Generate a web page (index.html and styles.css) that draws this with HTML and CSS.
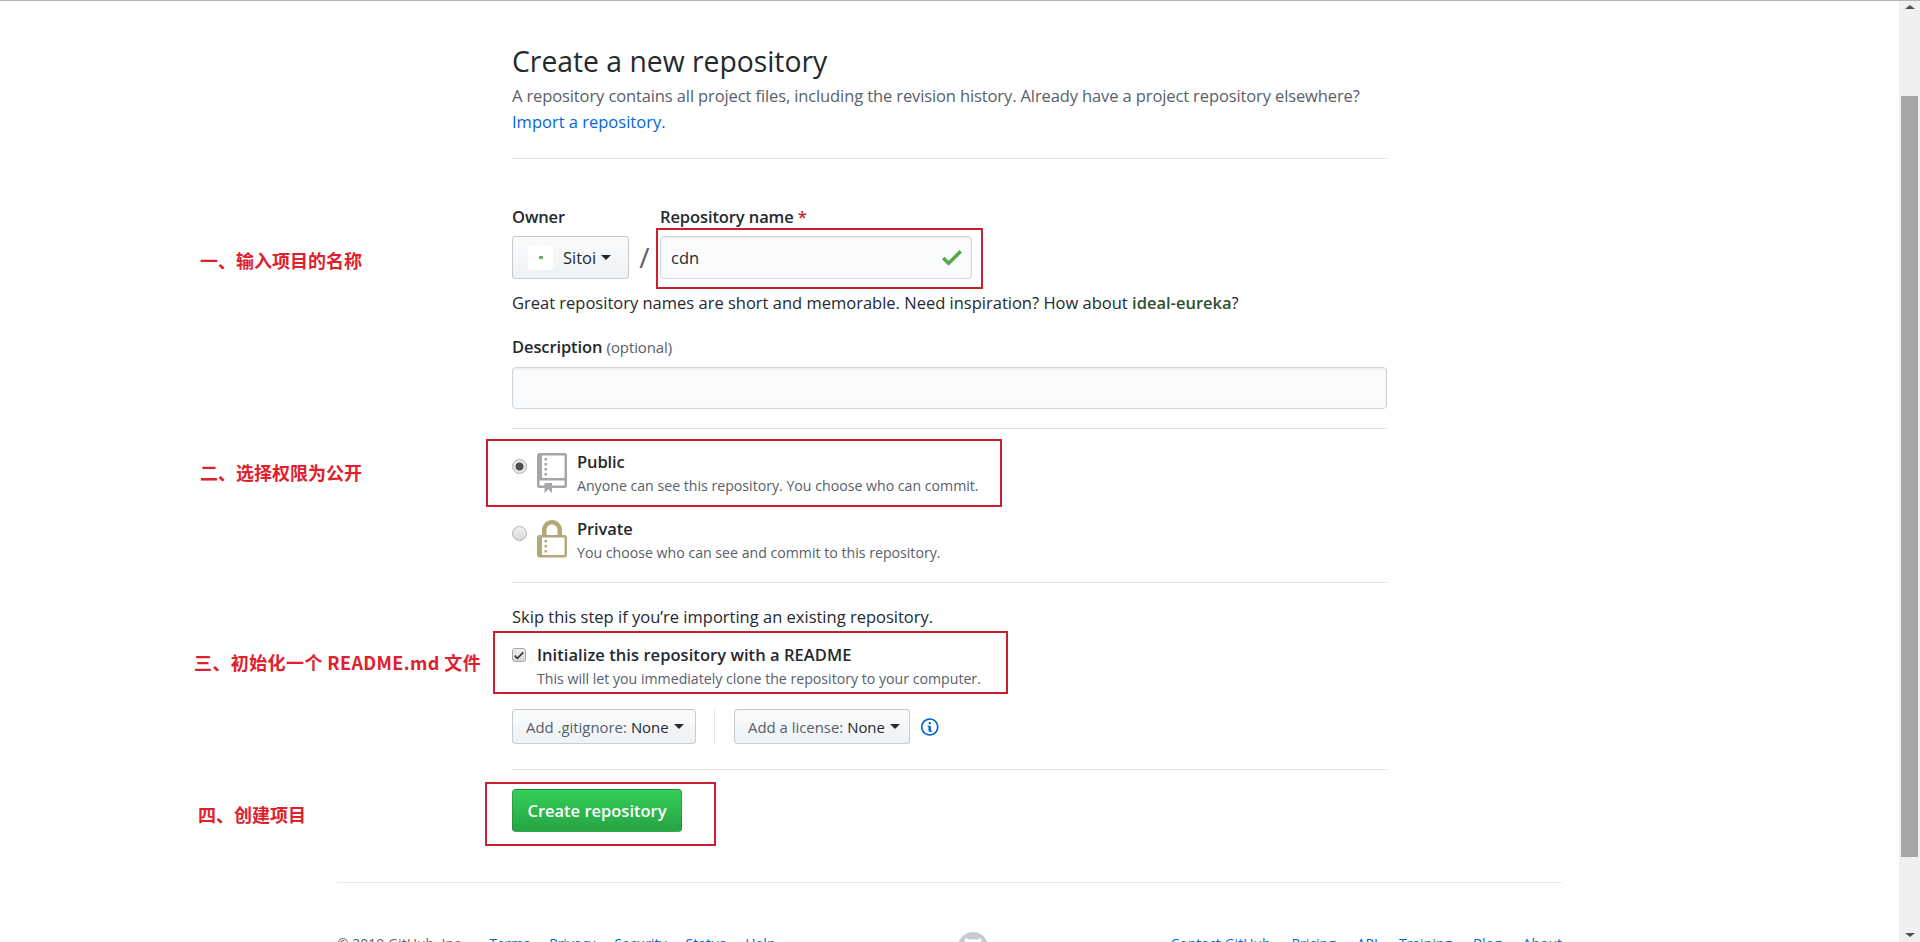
FILE: index.html
```html
<!DOCTYPE html>
<html lang="en">
<head>
  <meta charset="UTF-8" />
  <title>Create a new repository</title>
  <link rel="stylesheet" href="styles.css">
</head>
<body>

<div class="page">
  <main class="form-container">
    <div class="subhead">
      <h1>Create a new repository</h1>
      <p>A repository contains all project files, including the revision history. Already have a project repository elsewhere?<br><a href="#">Import a repository.</a></p>
    </div>

    <div class="owner-row">
      <div class="owner-col">
        <label>Owner</label>
        <button class="btn btn-owner" type="button">
          <span class="avatar"><i></i></span>
          <span>Sitoi</span>
          <span class="caret"></span>
        </button>
      </div>
      <span class="slash">/</span>
      <div class="name-col">
        <label>Repository name <em>*</em></label>
        <div class="name-field">
          <input class="text-input" type="text" value="cdn" />
          <svg class="check" viewBox="0 0 12 16"><path d="M12 5l-8 8-4-4 1.5-1.5L4 10l6.5-6.5L12 5z"/></svg>
        </div>
      </div>
    </div>
    <p class="name-note">Great repository names are short and memorable. Need inspiration? How about <strong>ideal-eureka</strong>?</p>

    <div class="desc-block">
      <label>Description <small>(optional)</small></label>
      <input class="text-input desc-input" type="text" />
    </div>

    <hr class="rule-desc" />

    <div class="choice choice-public">
      <span class="radio radio-on"></span>
      <svg class="choice-icon icon-repo" viewBox="0 0 12 16"><path d="M4 9H3V8h1v1zm0-3H3v1h1V6zm0-2H3v1h1V4zm0-2H3v1h1V2zm8-1v12c0 .55-.45 1-1 1H6v2l-1.5-1.5L3 16v-2H1c-.55 0-1-.45-1-1V1c0-.55.45-1 1-1h10c.55 0 1 .45 1 1zm-1 10H1v2h2v-1h3v1h5v-2zm0-10H2v9h9V1z"/></svg>
      <div class="choice-text">
        <b>Public</b>
        <span>Anyone can see this repository. You choose who can commit.</span>
      </div>
    </div>
    <div class="choice choice-private">
      <span class="radio"></span>
      <svg class="choice-icon icon-lock" viewBox="0 0 12 16"><path d="M4 13H3v-1h1v1zm8-6v7c0 .55-.45 1-1 1H1c-.55 0-1-.45-1-1V7c0-.55.45-1 1-1h1V4c0-2.2 1.8-4 4-4s4 1.8 4 4v2h1c.55 0 1 .45 1 1zM3.8 6h4.41V4c0-1.22-.98-2.2-2.2-2.2-1.22 0-2.2.98-2.2 2.2v2H3.8zM11 7H2v7h9V7zM4 8H3v1h1V8zm0 2H3v1h1v-1z"/></svg>
      <div class="choice-text">
        <b>Private</b>
        <span>You choose who can see and commit to this repository.</span>
      </div>
    </div>

    <hr class="rule-private" />

    <p class="skip-note">Skip this step if you’re importing an existing repository.</p>

    <div class="readme">
      <span class="checkbox"><svg viewBox="0 0 12 16"><path d="M12 5l-8 8-4-4 1.5-1.5L4 10l6.5-6.5L12 5z"/></svg></span>
      <div class="choice-text">
        <b>Initialize this repository with a README</b>
        <span>This will let you immediately clone the repository to your computer.</span>
      </div>
    </div>

    <div class="addons">
      <button class="btn btn-add btn-ignore" type="button">Add .gitignore: <strong>None</strong><span class="caret"></span></button>
      <span class="addons-sep"></span>
      <button class="btn btn-add btn-license" type="button">Add a license: <strong>None</strong><span class="caret"></span></button>
      <svg class="info" viewBox="0 0 14 16"><path d="M6.3 5.69a.942.942 0 0 1-.28-.7c0-.28.09-.52.28-.7.19-.18.42-.28.7-.28.28 0 .52.09.7.28.18.19.28.42.28.7 0 .28-.09.52-.28.7a1 1 0 0 1-.7.3c-.28 0-.52-.11-.7-.3zM8 7.99c-.02-.25-.11-.48-.31-.69-.2-.19-.42-.3-.69-.31H6c-.27.02-.48.13-.69.31-.2.2-.3.44-.31.69h1v3c.02.27.11.5.31.69.2.2.42.31.69.31h1c.27 0 .48-.11.69-.31.2-.19.3-.42.31-.69H8V7.98v.01zM7 2.3c-3.14 0-5.7 2.54-5.7 5.68 0 3.14 2.56 5.7 5.7 5.7s5.7-2.55 5.7-5.7c0-3.15-2.56-5.69-5.7-5.69v.01zM7 .98c3.86 0 7 3.14 7 7s-3.14 7-7 7-7-3.12-7-7 3.14-7 7-7z"/></svg>
    </div>

    <hr class="rule-addons" />

    <button class="btn-primary" type="button">Create repository</button>
  </main>

  <footer class="site-footer">
    <div class="footer-inner">
      <div class="footer-links">
        <span class="copyright">© 2019 GitHub, Inc.</span>
        <a href="#">Terms</a><a href="#">Privacy</a><a href="#">Security</a><a href="#">Status</a><a href="#">Help</a>
      </div>
      <svg class="footer-logo" viewBox="0 0 16 16"><path d="M8 0C3.58 0 0 3.58 0 8c0 3.54 2.29 6.53 5.47 7.59.4.07.55-.17.55-.38 0-.19-.01-.82-.01-1.49-2.01.37-2.53-.49-2.69-.94-.09-.23-.48-.94-.82-1.13-.28-.15-.68-.52-.01-.53.63-.01 1.08.58 1.23.82.72 1.21 1.87.87 2.33.66.07-.52.28-.87.51-1.07-1.78-.2-3.64-.89-3.64-3.95 0-.87.31-1.59.82-2.15-.08-.2-.36-1.02.08-2.12 0 0 .67-.21 2.2.82.64-.18 1.32-.27 2-.27.68 0 1.36.09 2 .27 1.53-1.04 2.2-.82 2.2-.82.44 1.1.16 1.92.08 2.12.51.56.82 1.27.82 2.15 0 3.07-1.87 3.75-3.65 3.95.29.25.54.73.54 1.48 0 1.07-.01 1.93-.01 2.2 0 .21.15.46.55.38A8.013 8.013 0 0 0 16 8c0-4.42-3.58-8-8-8z"/></svg>
      <div class="footer-links footer-links-right">
        <a href="#">Contact GitHub</a><a href="#">Pricing</a><a href="#">API</a><a href="#">Training</a><a href="#">Blog</a><a href="#">About</a>
      </div>
    </div>
  </footer>

  <!-- tutorial notes drawn over the screenshot -->
  <span class="note note-name">一、输入项目的名称</span>
  <span class="note note-public">二、选择权限为公开</span>
  <span class="note note-readme">三、初始化一个 README.md 文件</span>
  <span class="note note-create">四、创建项目</span>
  <span class="mark mark-name"></span>
  <span class="mark mark-public"></span>
  <span class="mark mark-readme"></span>
  <span class="mark mark-create"></span>
</div>

<div class="scrollbar">
  <span class="arrow-up"></span>
  <span class="thumb"></span>
  <span class="arrow-down"></span>
</div>

</body>
</html>
```

FILE: styles.css
```css
* {
  box-sizing: border-box;
}
html, body {
  height: 100%;
}
body {
  margin: 0;
  display: flex;
  height: 942px;
  overflow: hidden;
  background: #fff;
  color: #24292e;
  font-family: "Open Sans", "Noto Sans", sans-serif;
  font-size: 16.5px;
  line-height: 26px;
  border-top: 1px solid #b4b4b4;
}
.page {
  position: relative;
  flex: 1;
  overflow: hidden;
}
.form-container {
  width: 875px;
  margin: 0 auto;
  padding-top: 41px;
}
a {
  color: #0366d6;
  text-decoration: none;
}
h1, p {
  margin: 0;
}
hr {
  height: 1px;
  margin: 0;
  border: 0;
  background: #e1e4e8;
}

.subhead {
  height: 117px;
  border-bottom: 1px solid #e1e4e8;
}
.subhead h1 {
  font-size: 28.3px;
  font-weight: 400;
  line-height: 38px;
}
.subhead p {
  color: #586069;
  margin-top: 3px;
  letter-spacing: -0.115px;
}
.subhead a {
  letter-spacing: 0;
}

label {
  display: block;
  font-weight: 600;
  letter-spacing: -0.1px;
}
.owner-row {
  display: flex;
  align-items: flex-end;
  margin-top: 45px;
}
.owner-col label, .name-col label {
  height: 26px;
  margin-bottom: 6px;
}
.name-col label em {
  color: #cb2431;
  font-style: normal;
}
.btn {
  display: inline-flex;
  align-items: center;
  border: 1px solid rgba(27, 31, 35, 0.2);
  border-radius: 4px;
  background: linear-gradient(180deg, #fafbfc, #eff3f6 90%);
  color: #24292e;
  font-family: inherit;
  font-weight: 500;
}
.btn-owner {
  width: 117px;
  height: 43px;
  padding: 0 0 0 15px;
  font-size: 16.5px;
}
.avatar {
  display: flex;
  align-items: center;
  justify-content: center;
  width: 25px;
  height: 24px;
  margin-right: 10px;
  border-radius: 4px;
  background: #fff;
}
.avatar i {
  width: 4px;
  height: 3px;
  background: #6ba368;
  border-radius: 1px;
}
.caret {
  width: 0;
  height: 0;
  margin-left: 5px;
  border-top: 5px solid #24292e;
  border-left: 5px solid transparent;
  border-right: 5px solid transparent;
}
.slash {
  width: 31px;
  height: 43px;
  color: #586069;
  font-size: 28px;
  line-height: 43px;
  text-align: center;
}
.name-field {
  position: relative;
  width: 312px;
}
.text-input {
  display: block;
  width: 100%;
  height: 43px;
  padding: 0 10px;
  border: 1px solid #d1d5da;
  border-radius: 4px;
  background: #fafbfc;
  box-shadow: inset 0 1px 2px rgba(27, 31, 35, 0.075);
  color: #24292e;
  font-family: inherit;
  font-size: 16.5px;
}
.check {
  position: absolute;
  top: 8px;
  right: 10px;
  width: 20px;
  height: 27px;
  fill: #56a845;
}
.name-note {
  margin-top: 11px;
  line-height: 26px;
}
.name-note strong {
  color: #2f4f2f;
  font-weight: 600;
}

.desc-block {
  margin-top: 18px;
}
.desc-block label {
  height: 26px;
  margin-bottom: 7px;
}
.desc-block small {
  color: #586069;
  font-size: 15px;
  font-weight: 400;
}
.desc-input {
  height: 42px;
}
.rule-desc {
  margin-top: 19px;
}

.choice {
  display: flex;
  align-items: flex-start;
  height: 40px;
}
.choice-public {
  margin-top: 24px;
}
.choice-private {
  margin-top: 27px;
}
.choice .choice-text {
  margin-top: -3px;
}
.radio {
  width: 15px;
  height: 15px;
  margin: 6px 10px 0 0;
  border: 1px solid #b0b0b0;
  border-radius: 50%;
  background: linear-gradient(180deg, #f1f1f1, #d9d9d9);
}
.radio-on {
  background: radial-gradient(circle, #4f4f4f 0 3.6px, #e6e6e6 4.4px);
}
.choice-icon {
  width: 30px;
  height: 40px;
  margin-right: 10px;
  flex: none;
}
.icon-repo {
  fill: #a3a6ab;
}
.icon-lock {
  fill: #b5a777;
}
.choice-text b {
  display: block;
  height: 24px;
  font-weight: 600;
  line-height: 24px;
  letter-spacing: -0.1px;
}
.choice-text span {
  display: block;
  color: #586069;
  font-size: 14.15px;
  line-height: 24px;
}
.rule-private {
  margin-top: 22px;
}
.skip-note {
  margin-top: 21px;
}
.readme {
  display: flex;
  align-items: flex-start;
  margin-top: 13px;
}
.readme .choice-text b {
  letter-spacing: 0.05px;
}
.checkbox {
  display: flex;
  align-items: center;
  justify-content: center;
  width: 14px;
  height: 14px;
  margin: 5px 11px 0 0;
  border: 1px solid #a8a8a8;
  border-radius: 3px;
  background: linear-gradient(180deg, #eee, #d6d6d6);
}
.checkbox svg {
  width: 10px;
  height: 13px;
  fill: #333;
}
.addons {
  display: flex;
  align-items: center;
  margin-top: 18px;
}
.btn-add {
  height: 35px;
  padding: 0 13px;
  color: #586069;
  font-size: 14.9px;
  white-space: nowrap;
}
.btn-add strong {
  margin-left: 4px;
  color: #24292e;
  font-weight: 500;
}
.btn-ignore {
  width: 184px;
}
.btn-license {
  width: 176px;
}
.addons-sep {
  width: 1px;
  height: 35px;
  margin: 0 19px 0 18px;
  background: #e1e4e8;
}
.info {
  width: 17.5px;
  height: 20px;
  margin-left: 11px;
  fill: #0366d6;
}
.rule-addons {
  margin-top: 25px;
}
.btn-primary {
  display: block;
  width: 170px;
  height: 43px;
  margin-top: 19px;
  border: 1px solid rgba(27, 31, 35, 0.2);
  border-radius: 4px;
  background: linear-gradient(180deg, #34d058, #28a745 90%);
  color: #fff;
  font-family: inherit;
  font-size: 16.5px;
  font-weight: 600;
}

.site-footer {
  margin-top: 50px;
}
.footer-inner {
  position: relative;
  display: flex;
  justify-content: space-between;
  width: 1225px;
  margin: 0 auto;
  padding-top: 48px;
  border-top: 1px solid #eaecef;
  font-size: 14px;
}
.footer-links {
  display: flex;
  gap: 19px;
}
.footer-links-right {
  gap: 21px;
}
.copyright {
  color: #586069;
  margin-right: 6px;
}
.footer-logo {
  position: absolute;
  top: 49px;
  left: 621px;
  width: 30px;
  height: 30px;
  fill: #c6cbd1;
}

/* annotations */
.note {
  position: absolute;
  color: #e0202c;
  font-family: "Noto Sans CJK SC", sans-serif;
  font-size: 18px;
  font-weight: 700;
  line-height: 24px;
  white-space: nowrap;
}
.note-name { left: 200px; top: 247px; }
.note-public { left: 200px; top: 459px; }
.note-readme { left: 194px; top: 649px; letter-spacing: 0.4px; }
.note-create { left: 198px; top: 801px; }
.mark {
  position: absolute;
  border: 2px solid #c8202f;
}
.mark-name { left: 656px; top: 227px; width: 327px; height: 61px; }
.mark-public { left: 486px; top: 438px; width: 516px; height: 68px; }
.mark-readme { left: 493px; top: 630px; width: 515px; height: 63px; }
.mark-create { left: 485px; top: 781px; width: 231px; height: 64px; }

.scrollbar {
  position: relative;
  flex: none;
  display: flex;
  flex-direction: column;
  align-items: center;
  width: 21px;
  background: #f0f0f0;
}
.arrow-up, .arrow-down {
  width: 0;
  height: 0;
  border-left: 5px solid transparent;
  border-right: 5px solid transparent;
}
.arrow-up {
  margin-top: 4px;
  border-bottom: 4px solid #505050;
}
.thumb {
  width: 17px;
  height: 761px;
  margin-top: 87px;
  background: #a6a6a6;
}
.arrow-down {
  margin-top: 76px;
  border-top: 4px solid #505050;
}
```
